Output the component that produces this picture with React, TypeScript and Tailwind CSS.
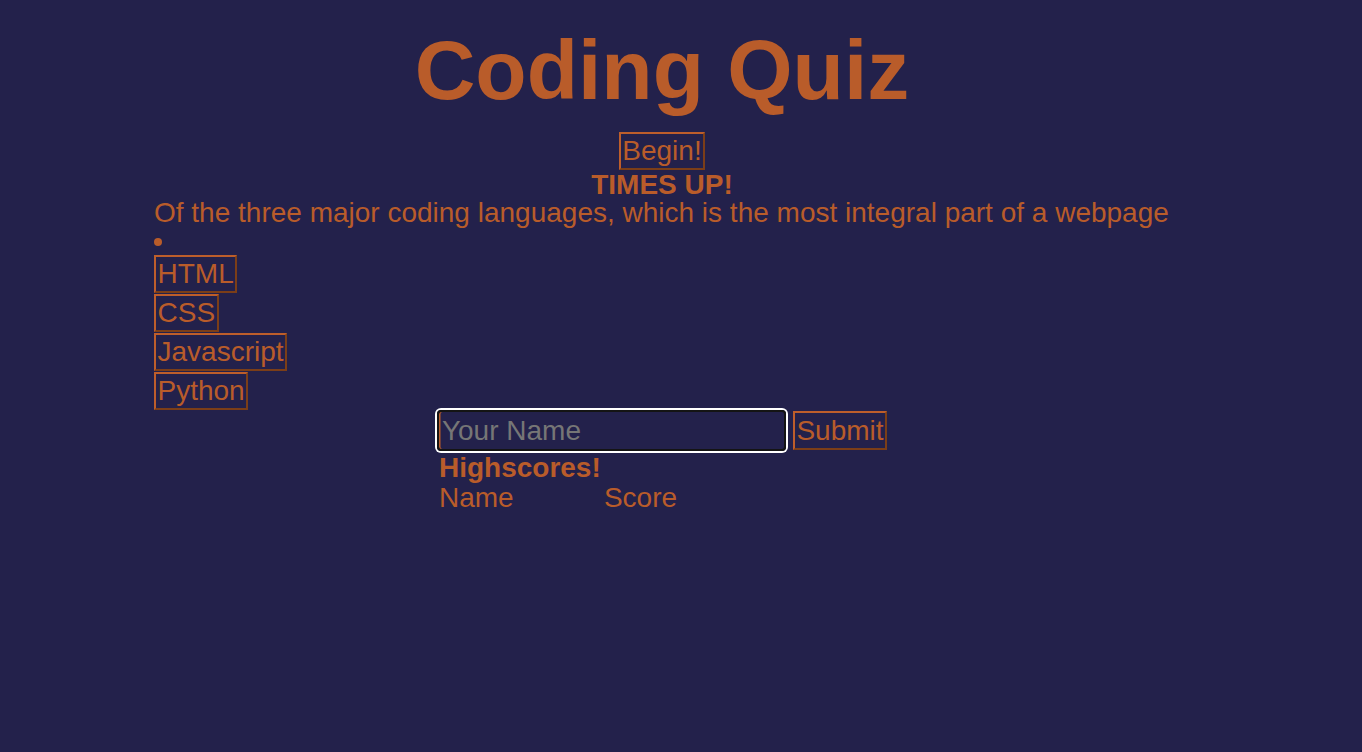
import React from "react";

const btn =
  "block h-[38px] border-[2px] border-solid [border-color:#bd5e2b_#7b3e18_#7b3e18_#bd5e2b] pl-[1.5px] pr-[1.5px] pt-px pb-px text-[28px] leading-[32px] text-[#b95c2a] bg-transparent";

export default function App() {
  return (
    <div
      className="min-h-[752px] w-full bg-[#23214b] text-[#b95c2a]"
      style={{ fontFamily: '"Liberation Sans", Arial, sans-serif' }}
    >
      <div className="ml-[154px] w-[1016px] flex flex-col pt-[22px]">
        <h1 className="text-center text-[84px] leading-[96px] font-bold">Coding Quiz</h1>
        <button className={btn + " self-center mt-[14px]"}>Begin!</button>
        <div className="text-center text-[28px] leading-[28px] font-bold mt-px">TIMES UP!</div>
        <div className="text-[28px] leading-[28px] whitespace-nowrap">
          Of the three major coding languages, which is the most integral part of a webpage
        </div>
        <div className="h-[28px] flex items-center">
          <div className="w-[8px] h-[8px] mt-[2px] rounded-full bg-[#b95c2a]" />
        </div>
        <div className="flex flex-col items-start gap-px">
          <button className={btn}>HTML</button>
          <button className={btn}>CSS</button>
          <button className={btn}>Javascript</button>
          <button className={btn}>Python</button>
        </div>
        <div className="self-center flex flex-col items-start">
          <div className="flex items-center gap-[7px]">
            <input
              placeholder="Your Name"
              className="w-[349px] h-[41px] border-2 border-[#141414] rounded-[4px] ring-2 ring-white bg-transparent px-[3px] text-[28px] text-[#b95c2a] placeholder:text-[#767676] outline-none shadow-[inset_1.5px_0_0_#bb5d2b]"
            />
            <button className={btn + " h-[39px]"}>Submit</button>
          </div>
          <div className="mt-[3px] text-[28px] leading-[28px] font-bold pl-[2px]">Highscores!</div>
          <div className="mt-[2px] grid grid-cols-[165px_auto] text-[28px] leading-[28px] pl-[2px]">
            <div>Name</div>
            <div>Score</div>
          </div>
        </div>
      </div>
    </div>
  );
}
